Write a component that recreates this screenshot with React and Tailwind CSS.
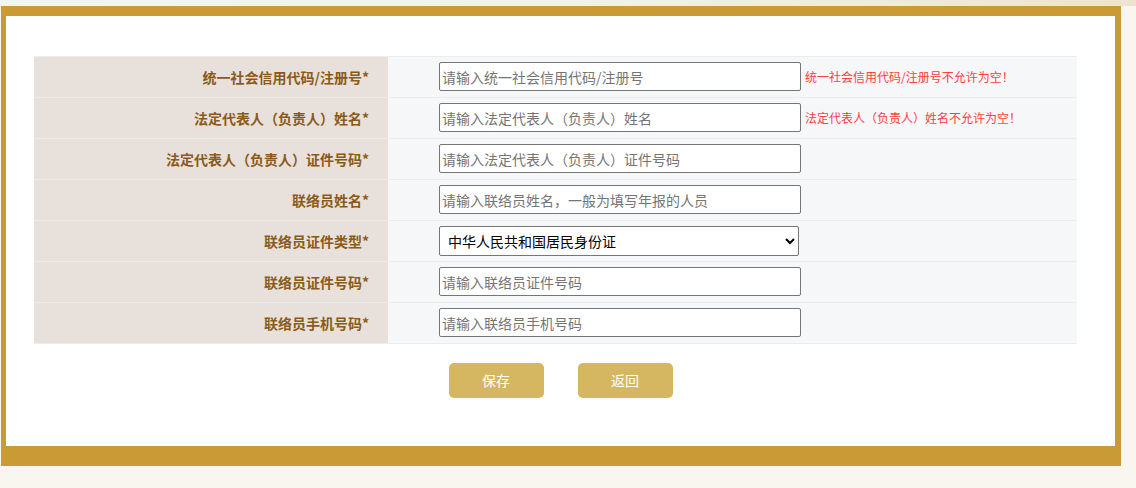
import React from "react";

const rows = [
  { label: "统一社会信用代码/注册号*", ph: "请输入统一社会信用代码/注册号", err: "统一社会信用代码/注册号不允许为空！" },
  { label: "法定代表人（负责人）姓名*", ph: "请输入法定代表人（负责人）姓名", err: "法定代表人（负责人）姓名不允许为空！" },
  { label: "法定代表人（负责人）证件号码*", ph: "请输入法定代表人（负责人）证件号码" },
  { label: "联络员姓名*", ph: "请输入联络员姓名，一般为填写年报的人员" },
  { label: "联络员证件类型*", select: true },
  { label: "联络员证件号码*", ph: "请输入联络员证件号码" },
  { label: "联络员手机号码*", ph: "请输入联络员手机号码" },
];

export default function App() {
  return (
    <div
      className="w-[1136px] h-[488px] bg-[#f9f6ef] overflow-hidden"
      style={{ fontFamily: '"Noto Sans CJK SC", "Noto Sans", sans-serif' }}
    >
      <div className="h-[6px] bg-gradient-to-r from-[#f4f4f4] via-[#f4f1ec] to-[#efe3cf]" />
      <div className="ml-[1px] w-[1120px] border-t-[10px] border-l-[5px] border-r-[6px] border-b-[20px] border-[#c99a35] bg-white">
        <div className="h-[430px] pt-[40px]">
          <div className="ml-[28px] w-[1043px] border-b border-[#ececec]">
            {rows.map((r, i) => (
              <div key={i} className="flex h-[41px] border-t border-[#ececec]">
                <div className="w-[354px] bg-[#e8e1db] flex items-center justify-end pr-[19px] text-[14px] font-bold text-[#8b5a18]">
                  {r.label}
                </div>
                <div className="flex-1 bg-[#f6f7f9] flex items-start pt-[5px] pl-[51px]">
                  {r.select ? (
                    <select className="w-[360px] h-[30px] bg-white border border-[#767676] rounded-[2px] text-[14px] text-black pl-[4px]">
                      <option>中华人民共和国居民身份证</option>
                    </select>
                  ) : (
                    <input
                      className="w-[362px] h-[29px] bg-white border border-[#767676] rounded-[2px] px-[2px] text-[14px] placeholder:text-[#757575]"
                      placeholder={r.ph}
                    />
                  )}
                  {r.err && (
                    <span className="ml-[4px] mt-[6px] text-[12px] text-[#ff4040] whitespace-nowrap">{r.err}</span>
                  )}
                </div>
              </div>
            ))}
          </div>
          <div className="mt-[19px] flex justify-center gap-[34px]">
            <button className="w-[95px] h-[35px] rounded-[5px] bg-[#d5b762] text-white text-[14px]">保存</button>
            <button className="w-[95px] h-[35px] rounded-[5px] bg-[#d5b762] text-white text-[14px]">返回</button>
          </div>
        </div>
      </div>
    </div>
  );
}
